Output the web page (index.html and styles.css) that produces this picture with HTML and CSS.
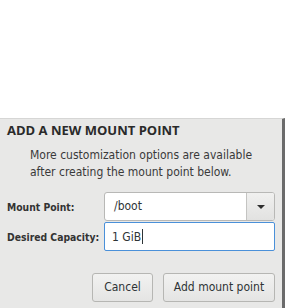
FILE: index.html
```html
<!DOCTYPE html>
<html>
<head>
<meta charset="utf-8">
<link rel="stylesheet" href="styles.css">
</head>
<body>
<div class="top"></div>
<div class="dialog">
  <div class="title">ADD A NEW MOUNT POINT</div>
  <div class="desc">More customization options are available<br>after creating the mount point below.</div>
  <div class="form">
    <div class="label">Mount Point:</div>
    <div class="combo">
      <div class="combo-text">/boot</div>
      <div class="combo-btn"><span class="arrow"></span></div>
    </div>
    <div class="label">Desired Capacity:</div>
    <div class="entry"><span>1 GiB</span><span class="caret"></span></div>
  </div>
  <div class="buttons">
    <div class="btn cancel">Cancel</div>
    <div class="btn add">Add mount point</div>
  </div>
</div>
</body>
</html>
```
FILE: styles.css
```css
html, body {
  margin: 0;
  padding: 0;
  background: #ffffff;
  width: 285px;
  height: 308px;
  overflow: hidden;
  font-family: "DejaVu Sans Condensed", "DejaVu Sans", sans-serif;
}
.top {
  height: 118px;
  background: #ffffff;
}
.dialog {
  height: 190px;
  background: #e8e8e7;
  border-top: 1px solid #d6d6d5;
  border-right: 3px solid #6b6b6b;
  box-sizing: border-box;
  padding: 3px 7px 0 7px;
  color: #2e3436;
}
.title {
  font-family: "Open Sans", sans-serif;
  font-weight: 700;
  font-size: 13px;
  line-height: 16px;
  letter-spacing: 0;
  color: #2a2a2a;
}
.desc {
  margin-top: 9px;
  padding-left: 23px;
  font-size: 12px;
  line-height: 17px;
  color: #3a3a3a;
}
.form {
  margin-top: 11px;
  display: grid;
  grid-template-columns: 97px 171px;
  row-gap: 1px;
  align-items: center;
}
.label {
  font-size: 10.3px;
  font-weight: bold;
  color: #333;
  white-space: nowrap;
}
.combo {
  height: 29px;
  box-sizing: border-box;
  display: flex;
  border: 1px solid #b8b8b6;
  border-radius: 3px;
  background: #fff;
}
.combo-text {
  flex: 1;
  padding-left: 9px;
  font-size: 12px;
  line-height: 27px;
  color: #2e3436;
}
.combo-btn {
  width: 27px;
  border-left: 1px solid #c4c4c2;
  background: linear-gradient(#f0f0ef, #e2e2e1);
  border-radius: 0 2px 2px 0;
  display: flex;
  align-items: center;
  justify-content: center;
}
.arrow {
  width: 0;
  height: 0;
  border-left: 4px solid transparent;
  border-right: 4px solid transparent;
  border-top: 4px solid #2e2e2e;
}
.entry {
  height: 29px;
  box-sizing: border-box;
  border: 1px solid #4a90d9;
  border-radius: 2px;
  background: #fff;
  padding-left: 7px;
  display: flex;
  align-items: center;
  font-size: 12px;
  color: #2e3436;
}
.caret {
  width: 1px;
  height: 15px;
  background: #2e3436;
  margin-left: 1px;
}
.buttons {
  margin-top: 22px;
  display: flex;
  justify-content: flex-end;
  gap: 10px;
}
.btn {
  height: 29px;
  box-sizing: border-box;
  border: 1px solid #b6b6b3;
  border-radius: 3px;
  background: linear-gradient(#f2f2f1, #e4e4e3);
  font-size: 12px;
  line-height: 27px;
  text-align: center;
  color: #2e3436;
}
.cancel { width: 61px; }
.add { width: 112px; }
```
